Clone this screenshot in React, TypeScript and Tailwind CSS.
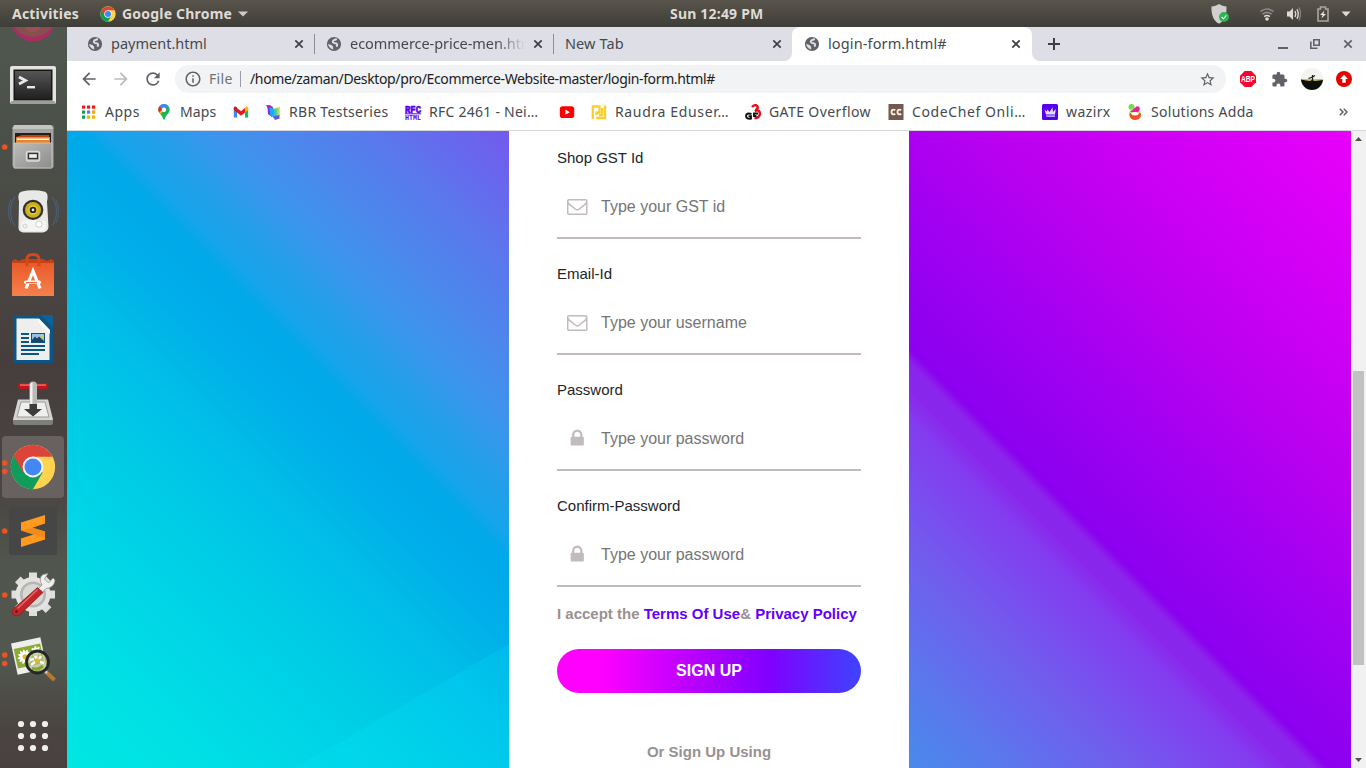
import React from "react";
import { MdStarBorder, MdExtension, MdRefresh, MdArrowBack, MdArrowForward, MdInfoOutline } from "react-icons/md";

const ui = "font-['Noto_Sans',sans-serif]";

function Globe() {
  return (
    <svg width="16" height="16" viewBox="0 0 16 16" className="shrink-0">
      <circle cx="8" cy="8" r="7.100" fill="#5f6368" />
      <path d="M10.800 3 L7.600 4.300 Q5.800 6 7.800 6.900 L10.600 7.600 Q12 9 10.200 10.400" fill="none" stroke="#dfe0e6" strokeWidth="1.900" />
      <path d="M2 8 L5.600 9 Q7.800 10.400 7.200 13.400 Q3 12.400 2 8Z" fill="#dfe0e6" />
    </svg>
  );
}

function CloseX({ color = "#3c4043" }: { color?: string }) {
  return (
    <svg width="10" height="10" viewBox="0 0 10 10" className="shrink-0">
      <path d="M1.3 1.3 L8.7 8.7 M8.7 1.3 L1.3 8.7" stroke={color} strokeWidth="1.7" />
    </svg>
  );
}

function ChromeLogo({ size }: { size: number }) {
  return (
    <svg width={size} height={size} viewBox="0 0 48 48" className="shrink-0">
      <circle cx="24" cy="24" r="23" fill="#ffd24a" />
      <path d="M24 24 L4.1 12.5 A23 23 0 0 0 24 47 L34 29.8Z" fill="#109d58" />
      <path d="M24 24 L14 29.8 L4.1 12.5 A23 23 0 0 1 43.9 12.8 L24 12.8Z" fill="#dc4437" />
      <circle cx="24" cy="24" r="11.2" fill="#f4f4f4" />
      <circle cx="24" cy="24" r="9" fill="#4285f4" />
    </svg>
  );
}

function TopBar() {
  return (
    <header className={`flex h-[27px] shrink-0 items-center bg-linear-to-b from-[#59554c] to-[#3e3d38] text-[14px] font-bold text-[#dfdbd2] ${ui}`}>
      <span className="ml-3 w-[69px] whitespace-nowrap tracking-[0.2px]">Activities</span>
      <span className="ml-[19px]"><ChromeLogo size={16} /></span>
      <span className="ml-[6px] w-[112px] whitespace-nowrap tracking-[0.2px]">Google Chrome</span>
      <svg width="10" height="6" viewBox="0 0 10 6" className="ml-[4px]"><path d="M0 .5H10L5 5.500Z" fill="#cfccc4" /></svg>
      <span className="ml-[422px] whitespace-nowrap tracking-[0.2px]">Sun 12:49 PM</span>
      <div className="ml-auto flex items-center">
        <svg width="20" height="22" viewBox="0 0 20 22" className="mr-[29px]">
          <path d="M9 1 C6.5 2.8 4 3.2 1.5 3.4 C1.2 11 3 17.5 9 20.8 C15 17.5 16.8 11 16.5 3.4 C14 3.2 11.5 2.8 9 1Z" fill="#d0cfcd" />
          <circle cx="14" cy="14" r="5" fill="#2fb350" />
          <path d="M11.6 14 L13.4 15.8 L16.4 12.4" stroke="#fff" strokeWidth="1.1" fill="none" />
        </svg>
        <svg width="16" height="16" viewBox="0 0 16 16" className="mr-[11px]" fill="none">
          <path d="M1.5 5.5 Q8 .5 14.5 5.5" stroke="#8b8984" strokeWidth="1.6" />
          <path d="M3.4 8.2 Q8 4.6 12.6 8.2" stroke="#8b8984" strokeWidth="1.6" />
          <path d="M5.2 10.6 Q8 8.4 10.8 10.6" stroke="#dfdbd2" strokeWidth="1.6" />
          <circle cx="8" cy="13" r="1.8" fill="#dfdbd2" />
        </svg>
        <svg width="16" height="16" viewBox="0 0 16 16" className="mr-[15px]" fill="none">
          <path d="M1 5.5H3.5L7 2V14L3.5 10.5H1Z" fill="#dfdbd2" />
          <path d="M9 5 Q10.6 8 9 11" stroke="#dfdbd2" strokeWidth="1.4" />
          <path d="M11 3.2 Q13.4 8 11 12.8" stroke="#dfdbd2" strokeWidth="1.4" />
          <path d="M13 1.6 Q16 8 13 14.4" stroke="#8b8984" strokeWidth="1.2" />
        </svg>
        <svg width="12" height="16" viewBox="0 0 12 16" className="mr-[12px]" fill="none">
          <path d="M1 3H3.5V1H8.5V3H11V15H1Z" stroke="#a9a69f" strokeWidth="1.6" />
          <path d="M7.5 4.5 L3 9H5.6L4.4 12.5 L9 8H6.4Z" fill="#eeeae1" />
        </svg>
        <svg width="10" height="6" viewBox="0 0 10 6" className="mr-[15px]"><path d="M.5 .5H9.5L5 5.5Z" fill="#dfdbd2" /></svg>
      </div>
    </header>
  );
}

function Cell({ children, dots = [], active = false }: { children: React.ReactNode; dots?: number[]; active?: boolean }) {
  return (
    <div className="ml-px flex h-16 w-16 shrink-0 items-center">
      <svg width="64" height="64" viewBox="0 0 64 64" className="overflow-visible">
        {active && <rect x="1" y="-1" width="62" height="62" rx="4" fill="#676260" />}
        {dots.map((y) => (
          <circle key={y} cx="3.7" cy={y} r="2.8" fill="#e95420" />
        ))}
        {children}
      </svg>
    </div>
  );
}

function Dock() {
  return (
    <aside className="flex w-[67px] shrink-0 flex-col overflow-hidden bg-[linear-gradient(180deg,#50574e_0%,#4a5049_16%,#4b4643_30%,#453e3d_45%,#4a4442_62%,#50554d_72%,#525850_85%,#4b4743_93%,#493f3f_100%)]">
      <div className="ml-px h-[26px] shrink-0">
        <svg width="64" height="26" viewBox="0 0 64 26">
          <ellipse cx="32" cy="-7" rx="22" ry="21.500" fill="#a92d62" />
          <ellipse cx="32" cy="-9" rx="21" ry="19" fill="#87504e" />
          <ellipse cx="32" cy="-2" rx="8" ry="7" fill="#9a5156" />
        </svg>
      </div>
      <Cell>
        <defs><linearGradient id="term" x1="0" y1="0" x2="0" y2="1"><stop stopColor="#555" /><stop offset="1" stopColor="#202020" /></linearGradient></defs>
        <rect x="9" y="13" width="46" height="38" rx="2" fill="#e3e3e1" />
        <rect x="10" y="48" width="44" height="3" rx="1" fill="#9d9d9b" />
        <rect x="12.500" y="16.500" width="39" height="31" fill="#161616" />
        <rect x="14" y="18" width="36" height="28" fill="url(#term)" />
        <path d="M18 24 L24.500 27.500 L18 31" stroke="#e8e8e8" strokeWidth="2.800" fill="none" />
        <rect x="26" y="33" width="8" height="2.400" fill="#e8e8e8" />
      </Cell>
      <Cell dots={[30]}>
        <path d="M13 9 L15 8 H49 L52.500 9 V50 L50 51.500 H14 L11.500 49 V10Z" fill="#a3a3a1" />
        <path d="M13 8 H50 L52.500 12 H11.500Z" fill="#c4c4c2" />
        <rect x="14" y="16" width="36" height="11" fill="#201f1e" />
        <path d="M15 20 L21 18 H48 V21Z" fill="#c1440e" />
        <rect x="15" y="20" width="34" height="6" fill="#e8842a" />
        <rect x="16" y="21.500" width="32" height="1.500" fill="#fff3e4" />
        <defs><linearGradient id="drw" x1="0" y1="0" x2="1" y2="1"><stop stopColor="#bcbcba" /><stop offset="1" stopColor="#8d8d8b" /></linearGradient></defs>
        <path d="M13 26 H51 V51 H13Z" fill="url(#drw)" stroke="#c9c9c7" strokeWidth=".8" />
        <rect x="25.500" y="34.500" width="13" height="9.500" rx="2" fill="#aaa" stroke="#dbdbdb" strokeWidth="1.500" />
        <rect x="27.500" y="36.500" width="9" height="5" fill="#eee" stroke="#333" strokeWidth="1.300" />
      </Cell>
      <Cell>
        <g transform="translate(0,-1) scale(1,.98)">
          <g fill="none" stroke="#4b6588" strokeWidth="1.200" strokeOpacity=".7">
            <path d="M14 17 Q5 32 14 47 M10 20 Q5 32 10 44 M51 17 Q60 32 51 47 M55 20 Q60 32 55 44" />
          </g>
          <path d="M20 12 Q32 9 44 12 Q48 14 46 22 L47.500 48 Q47 53 42 53.500 H22 Q17 53 17.500 48 L18 22 Q16 14 20 12Z" fill="#e8e8e6" />
          <rect x="20" y="41" width="25" height="11" rx="4" fill="#f5f5f3" />
          <circle cx="32" cy="30.500" r="10.300" fill="#30302f" />
          <circle cx="32" cy="30.500" r="8" fill="#ccb018" />
          <circle cx="32" cy="30.500" r="4.700" fill="#e6cf3f" />
          <circle cx="32" cy="30.500" r="3.300" fill="#292929" />
          <circle cx="32" cy="30.500" r="1.300" fill="#eee" />
          <circle cx="38" cy="45" r="3.200" fill="#fff" stroke="#ccc" />
          <circle cx="24" cy="47" r="2" fill="none" stroke="#ccc" />
        </g>
      </Cell>
      <Cell>
        <defs><linearGradient id="bag" x1="0" y1="0" x2="0" y2="1"><stop stopColor="#e95a2a" /><stop offset="1" stopColor="#f5814c" /></linearGradient></defs>
        <path d="M11 16 L14 14 L18 16 L22 14 H42 L46 16 L50 14 L53 16 V51 H11Z" fill="#c64214" />
        <rect x="11" y="18" width="42" height="33" fill="url(#bag)" />
        <path d="M26 21 V14 Q26 9.500 32 9.500 Q38 9.500 38 14 V21" fill="none" stroke="#d44818" strokeWidth="3" />
        <path d="M25 43.500 L32 26 L39 43.500" fill="none" stroke="#fff" strokeWidth="3.200" />
        <rect x="23" y="35.500" width="17" height="3.600" rx="1.800" fill="#fff" />
        <rect x="25" y="37" width="11" height="1.400" fill="#ef6d39" />
      </Cell>
      <Cell>
        <path d="M14 6 H41 L52 18 V52 Q52 54 50 54 H14 Q12 54 12 52 V8 Q12 6 14 6Z" fill="#0c5687" />
        <path d="M40 6 H50 Q52 6 52 8 V18.500Z" fill="#0d629b" />
        <path d="M15.500 9.500 H36 L48.500 23 V51 H15.500Z" fill="#eeeeed" />
        <path d="M35 10 L49 25 V21 L38 9.500Z" fill="#fff" />
        <g fill="#0b5585">
          <rect x="20" y="24" width="8" height="2" /><rect x="20" y="28" width="8" height="2" /><rect x="20" y="32" width="8" height="2" />
          <rect x="20" y="36" width="24" height="2" /><rect x="20" y="40" width="24" height="2" /><rect x="20" y="44" width="18" height="2" />
        </g>
        <rect x="30" y="24" width="14" height="10" fill="#0b5585" />
        <rect x="31" y="25" width="12" height="8" fill="#8fc3e8" />
        <circle cx="41" cy="27" r="1.500" fill="#f6c837" />
        <path d="M31 31 L34 27.500 L36 29.500 L38 27.500 L43 32 V33 H31Z" fill="#23425a" />
      </Cell>
      <Cell>
        <g transform="translate(0,-2)">
          <path d="M17 29 H47 L52 48 V52 Q52 54 50 54 H14 Q12 54 12 52 V48Z" fill="#7d7f7a" />
          <path d="M17 28.500 H47 L52 49 H12Z" fill="#d5d6d3" />
          <path d="M20 31 H44 L48 46 H16Z" fill="#efefee" stroke="#999a96" />
          <rect x="17" y="12" width="30" height="6" rx="3" fill="#c31518" />
          <rect x="19" y="13.300" width="26" height="1.500" fill="#ee6e6b" />
          <path d="M28.500 14 Q28 10.500 32 10.500 Q36 10.500 36 14 V33 H28.500Z" fill="#b9bab7" />
          <path d="M29 13 V33 H31.500 V11.500Z" fill="#f1f1f0" />
          <path d="M28.500 33 H36 V38 H41 L32 45.500 L23 38 H28.500Z" fill="#3c3e3c" />
        </g>
      </Cell>
      <Cell active dots={[26, 34.5]}>
        <g transform="translate(8.800,6.800) scale(.965)">
          <circle cx="24" cy="24" r="23" fill="#ffd24f" />
          <path d="M24 24 L4.100 12.500 A23 23 0 0 0 24 47 L34 29.800Z" fill="#109d5c" />
          <path d="M24 24 L14 29.800 L4.100 12.500 A23 23 0 0 1 44.500 13.500 L24 13.500Z" fill="#dc4439" />
          <circle cx="24" cy="24" r="10.800" fill="#f4f4f4" />
          <circle cx="24" cy="24" r="8.800" fill="#4486f4" />
        </g>
      </Cell>
      <Cell dots={[30]}>
        <rect x="8" y="6" width="48" height="48" rx="3" fill="#464646" />
        <path d="M20 21.500 L44 14 V22.500 L31.500 26.700 L44 30.500 V38.500 L20 46 V37.500 L32.500 33.500 L20 29.500Z" fill="#ff9a1f" />
        <path d="M20 29.500 L32.500 33.500 L44 37 V30.500 L31.500 26.700Z" fill="#f08c1a" />
      </Cell>
      <Cell dots={[30]}>
        <g stroke="#dededc" strokeWidth="8">
          {[0, 45, 90, 135].map((a) => (
            <path key={a} d="M32 7.500 V51" transform={`rotate(${a} 32 29.500)`} />
          ))}
        </g>
        <circle cx="32" cy="29.500" r="17.500" fill="#e3e3e1" />
        <circle cx="32" cy="29.500" r="13" fill="#b5b6b4" />
        <circle cx="32" cy="29.500" r="10.500" fill="#d8d8d6" />
        <path d="M36 25 L41 20 Q37 13 42 9.500 L47 8.500 L43.500 14 L47.500 18 L52 13 L54 15 Q53 23 45 23.500 L39 30Z" fill="#efefee" stroke="#92938f" strokeWidth=".8" />
        <path d="M36.500 22.500 L42 27.500 L20 48.500 Q15 52.500 12 49.500 Q9.500 46 13.500 43Z" fill="#c2262a" stroke="#8d1518" strokeWidth=".7" />
        <path d="M36.500 24.500 L16.500 43.500" stroke="#e4696a" strokeWidth="1.500" />
        <circle cx="15.500" cy="46.500" r="1.300" fill="#611" />
      </Cell>
      <Cell dots={[26, 34.5]}>
        <g transform="rotate(-12 28 27)">
          <rect x="13" y="11" width="30" height="32" fill="#eeeeec" />
          <rect x="14.500" y="17" width="27" height="20" fill="#8bab32" />
          <g fill="#fff">
            {[0, 30, 60, 90, 120, 150].map((a) => <ellipse key={a} cx="24" cy="27" rx="7.500" ry="1.800" transform={`rotate(${a} 24 27)`} />)}
            {[0, 45, 90, 135].map((a) => <ellipse key={a} cx="36" cy="24" rx="5.500" ry="1.500" transform={`rotate(${a} 36 24)`} />)}
          </g>
          <circle cx="24" cy="27" r="2.600" fill="#f0b323" />
        </g>
        <path d="M45 43 L53.500 51" stroke="#b57a2c" strokeWidth="4" />
        <path d="M42 40 L46 44" stroke="#ccc" strokeWidth="2.500" />
        <circle cx="36.500" cy="33" r="11" fill="#b8c088" fillOpacity=".7" stroke="#252727" strokeWidth="2.800" />
        <path d="M29 31 L33 30 M30 36 L34 33 M34 27 L36 30 M40 27 L38 30 M39 33 L43 34" stroke="#fff" strokeWidth="2.500" />
        <circle cx="36" cy="31.500" r="2.200" fill="#f0b323" />
        <path d="M31 39 Q36 42 42 37" fill="none" stroke="#84a52e" strokeWidth="3" />
      </Cell>
      <div className="mt-[11px]">
        <Cell>
          {[20, 32, 44].map((x) => [20, 32, 44].map((y) => <circle key={`${x}-${y}`} cx={x} cy={y} r="3.100" fill="#f0efed" />))}
        </Cell>
      </div>
    </aside>
  );
}

const tabText = `whitespace-nowrap pb-0.5 text-[14.5px] leading-5 text-[#45494d] ${ui}`;

function TabStrip() {
  return (
    <div className="flex h-[34px] shrink-0 bg-white">
      <div className="flex flex-1 items-center rounded-br-lg bg-[#dedfe6]">
        <div className="flex h-5 w-[248px] items-center border-r border-[#8a8d91] pr-[10px] pl-5">
          <Globe />
          <span className={`ml-2 flex-1 ${tabText}`}>payment.html</span>
          <CloseX />
        </div>
        <div className="flex h-5 w-[239px] items-center border-r border-[#8a8d91] pr-[10px] pl-[11px]">
          <Globe />
          <span className={`ml-2 w-[175px] overflow-hidden mask-r-from-84% mask-r-to-100% tracking-[-0.05px] ${tabText}`}>ecommerce-price-men.html</span>
          <span className="ml-auto"><CloseX /></span>
        </div>
        <div className="flex h-5 flex-1 items-center pr-[10px] pl-[11px]">
          <span className={`flex-1 tracking-[0.1px] ${tabText}`}>New Tab</span>
          <CloseX />
        </div>
      </div>
      <div className="bg-[#dedfe6]">
        <div className="flex h-full w-[240px] items-center rounded-t-lg bg-white pr-[11px] pl-[12px]">
          <Globe />
          <span className={`ml-2 flex-1 tracking-[0.12px] ${tabText}`}>login-form.html#</span>
          <CloseX />
        </div>
      </div>
      <div className="flex w-[334px] items-center rounded-bl-lg bg-[#dedfe6] pr-[13px] pl-4">
        <svg width="12" height="12" viewBox="0 0 12 12"><path d="M6 0V12M0 6H12" stroke="#3c4043" strokeWidth="2" /></svg>
        <svg width="10" height="10" viewBox="0 0 10 10" className="mr-[22px] ml-auto"><path d="M0 9H10" stroke="#5f6368" strokeWidth="2" /></svg>
        <svg width="10" height="10" viewBox="0 0 10 10" className="mr-[23px]" fill="none" stroke="#5f6368" strokeWidth="1.600"><path d="M3.800 .8H9.200V6.200H3.800ZM.8 2.500V9.200H7.500" /></svg>
        <CloseX color="#5f6368" />
      </div>
    </div>
  );
}

function Toolbar() {
  return (
    <div className="flex h-9 shrink-0 items-center bg-white pr-[14px] pl-[12px] text-[#5f6368]">
      <MdArrowBack size={20} />
      <MdArrowForward size={20} className="ml-3 text-[#b9bbbe]" />
      <MdRefresh size={20} className="ml-3" />
      <div className="ml-3 flex h-7 flex-1 items-center rounded-full bg-[#f1f3f4] pr-[10px] pl-[9px]">
        <MdInfoOutline size={18} />
        <span className={`ml-[7px] w-[31px] pb-0.5 text-[14px] tracking-[0.3px] text-[#6d7175] ${ui}`}>File</span>
        <span className="h-4 w-px bg-[#9a9da1]" />
        <span className={`ml-[9px] whitespace-nowrap pb-0.5 text-[14px] text-[#202124] ${ui} tracking-[-0.36px]`}>/home/zaman/Desktop/pro/Ecommerce-Website-master/login-form.html#</span>
        <MdStarBorder size={17} className="ml-auto" />
      </div>
      <svg width="16" height="16" viewBox="0 0 16 16" className="ml-[14px]">
        <path d="M4.700 0H11.300L16 4.700V11.300L11.300 16H4.700L0 11.300V4.700Z" fill="#f0062e" />
        <text x="8" y="11" textAnchor="middle" fontSize="8.500" fontWeight="700" fill="#fff" fontFamily="Liberation Sans" textLength="14" lengthAdjust="spacingAndGlyphs">ABP</text>
      </svg>
      <MdExtension size={17} className="ml-[15px]" />
      <svg width="22" height="22" viewBox="0 0 22 22" className="ml-[13px]">
        <defs><clipPath id="av"><circle cx="11" cy="11" r="11" /></clipPath></defs>
        <g clipPath="url(#av)">
          <rect width="22" height="22" fill="#f2f4ee" />
          <path d="M0 11 H22 V14 H0Z" fill="#cfc25f" />
          <path d="M0 11.500 L5 12.500 L9 13 L11 12 L14 13 L22 12 V22 H0Z" fill="#0c0f08" />
          <path d="M11.500 7 V13 M7.500 10.500 L11.500 9 L14 7.500" stroke="#222" strokeWidth="1.300" fill="none" />
        </g>
      </svg>
      <svg width="16" height="16" viewBox="0 0 16 16" className="ml-[13px]">
        <circle cx="8" cy="8" r="8" fill="#e60000" />
        <path d="M8 3.700 L12 8H9.700V11.800H6.300V8H4Z" fill="#fff" />
      </svg>
    </div>
  );
}

const icons: Record<string, React.ReactNode> = {
  apps: (
    <>
      {["#ea1c1c", "#ea1c1c", "#ea1c1c", "#0f9d58", "#4285f4", "#f4a400", "#0f9d58", "#f4b400", "#f4b400"].map((c, i) => (
        <rect key={i} x={2 + (i % 3) * 5} y={1.500 + Math.floor(i / 3) * 5} width="3.200" height="3.200" fill={c} />
      ))}
    </>
  ),
  maps: (
    <>
      <path d="M8 0 A5.700 5.700 0 0 1 13.700 5.700 C13.700 9.500 9.500 11 8.800 15 Q8 16.500 7.200 15 C6.500 11 2.300 9.500 2.300 5.700 A5.700 5.700 0 0 1 8 0Z" fill="#1eb455" />
      <path d="M2.400 6.500 Q3 8.300 4.800 10 L9.500 4.500 L6 4Z" fill="#fbbc04" />
      <path d="M3.500 2.200 L7 5 L3.300 8.500 Q2.300 7 2.300 5.700 Q2.300 3.500 3.500 2.200Z" fill="#ea2a20" />
      <path d="M3.500 2.200 A5.700 5.700 0 0 1 12.500 2.200 L9 6 L6 5.200Z" fill="#4285f4" />
      <circle cx="8" cy="5.700" r="2.200" fill="#fff" />
    </>
  ),
  gmail: (
    <>
      <path d="M.8 4 V13.600 H4 V7Z" fill="#4285f4" /><path d="M15.200 4 V13.600 H12 V7Z" fill="#1eb455" />
      <path d="M4 4 L8 7.200 L12 4 V8.500 L8 11.700 L4 8.500Z" fill="#ea1515" />
      <path d="M.8 4 Q.8 2.300 2.600 2.600 L4 3.600 V8.500 L.8 6Z" fill="#c5221f" /><path d="M15.200 4 Q15.200 2.300 13.400 2.600 L12 3.600 V8.500 L15.200 6Z" fill="#fbbc04" />
    </>
  ),
  rbr: (
    <>
      <path d="M1 1 H5 L8 3 V12 L3 10 L3 5Z" fill="#f01fb5" /><path d="M2.500 2 L7 3 V13 L3 10Z" fill="#7a2cf0" /><path d="M4.500 3.200 L9 4.600 V14 L5 11Z" fill="#22a9f4" />
      <path d="M9 4.500 L15 2.500 V11.500 L10 14Z" fill="#f6dc3a" /><path d="M9 5 L13.500 4 V12 L9.500 14Z" fill="#6fe37a" /><path d="M9 5 L11.500 4.800 V13 L9 14Z" fill="#2fc4e0" /><path d="M8 12.500 L14.500 11 V14.500 L10 16Z" fill="#6a52e0" />
    </>
  ),
  rfc: (
    <g fill="#5a00ee" fontFamily="Liberation Mono" fontWeight="700">
      <text x="0" y="8.500" fontSize="10.500" textLength="16" lengthAdjust="spacingAndGlyphs" stroke="#5a00ee" strokeWidth=".7">RFC</text>
      <rect y="9.300" width="16" height="1" />
      <text x="0" y="16" fontSize="7" textLength="16" lengthAdjust="spacingAndGlyphs">HTML</text>
    </g>
  ),
  yt: (
    <><rect x=".8" y="2.300" width="14.400" height="11.700" rx="2.800" fill="#f00" /><path d="M6.400 5.600 L10.800 8.200 L6.400 10.800Z" fill="#fff" /></>
  ),
  raudra: (
    <g fill="none" stroke="#f9cf2c" strokeWidth="2.300">
      <path d="M1.800 15 V2.500 H8.500 V8.500 H5.500 V11" /><path d="M14 1.500 V14 H5 M11 4 V11 H8" />
    </g>
  ),
  gate: (
    <>
      <path d="M7 3 Q10 -.5 12.500 2.500 Q13.500 5 10 7.500 M10 6 Q15 5.500 15 10 Q14 14.500 9.500 14" fill="none" stroke="#e0101c" strokeWidth="2.500" />
      <path d="M6.500 10 Q1.300 8.500 1 12 Q1.500 15.500 6 14.500 V12.300 H3.500 M13 9.500 H9 V12 H11.500" fill="none" stroke="#101010" strokeWidth="1.900" />
    </>
  ),
  cc: (
    <><rect x=".5" y="0" width="15" height="16" fill="#74594a" /><path d="M7.300 6.200 Q3.500 4.500 3.500 8 Q3.500 11.500 7.300 9.800 M13.300 6.200 Q9.500 4.500 9.500 8 Q9.500 11.500 13.300 9.800" fill="none" stroke="#f3ede6" strokeWidth="1.900" /></>
  ),
  wazirx: (
    <><rect width="16" height="16" rx="1.500" fill="#5500ee" /><path d="M2.500 5.500 L4.800 7.500 L5.500 5.500 L7.500 8 L10.500 3.500 L11 8 L13.800 5 L13 10.500 H4Z" fill="#e5dcff" /><path d="M4 11.400 H13 V12.800 H4.500Z" fill="#e5dcff" /></>
  ),
  adda: (
    <>
      <circle cx="4.500" cy="3" r="3" fill="#72dd4f" /><circle cx="8" cy="10" r="6" fill="#b4ef8a" /><path d="M3 8 L8 3.500 L12.500 6 L11 8Z" fill="#f0249c" />
      <path d="M2.500 9.500 Q8 7 14 9.500 Q14.500 15.500 8 16 Q2 15.500 2.500 9.500Z" fill="#f3511e" /><path d="M4 9 Q8 7 12 9 Q11.500 11.500 8 11.500 Q4.500 11.500 4 9Z" fill="#fff" /><circle cx="10.500" cy="4.600" r="2.300" fill="#ec1d92" />
    </>
  ),
};

const bookmarks: [string, string, string, string][] = [
  ["apps", "Apps", "w-[76px]", "ml-px tracking-[0.5px]"],
  ["maps", "Maps", "w-[77px]", "tracking-[0.1px]"],
  ["gmail", "", "w-[32px]", ""],
  ["rbr", "RBR Testseries", "w-[140px]", "tracking-[0.3px]"],
  ["rfc", "RFC 2461 - Nei…", "w-[154px]", "tracking-[0.25px]"],
  ["yt", "", "w-[32px]", ""],
  ["raudra", "Raudra Eduser…", "w-[154px]", "tracking-[0.65px]"],
  ["gate", "GATE Overflow", "w-[143px]", "tracking-[0.4px]"],
  ["cc", "CodeChef Onli…", "w-[154px]", "tracking-[0.6px]"],
  ["wazirx", "wazirx", "w-[85px]", "tracking-[0.4px]"],
  ["adda", "Solutions Adda", "w-[150px]", "tracking-[0.3px]"],
];

function Bookmarks() {
  return (
    <nav className="flex h-[34px] shrink-0 items-center border-b border-[#d5d6dc] bg-white pr-[18px] pb-[3px] pl-[13px]">
      {bookmarks.map(([icon, label, width, track]) => (
        <div key={icon} className={`flex shrink-0 items-center gap-2 ${width}`}>
          <svg width="16" height="16" viewBox="0 0 16 16" className="shrink-0 overflow-visible">{icons[icon]}</svg>
          {label && <span className={`whitespace-nowrap pb-px text-[14px] leading-5 text-[#45494d] ${ui} ${track}`}>{label}</span>}
        </div>
      ))}
      <svg width="9" height="8" viewBox="0 0 9 8" className="ml-auto"><path d="M.8 .8L4 4L.8 7.200M4.800 .8L8 4L4.800 7.200" fill="none" stroke="#5f6368" strokeWidth="1.500" /></svg>
    </nav>
  );
}

const envelope = "M1664 1504v-768q-32 36-69 66-268 206-426 338-51 43-83 67t-86.5 48.5-102.5 24.5h-2q-48 0-102.5-24.5t-86.5-48.5-83-67q-158-132-426-338-37-30-69-66v768q0 13 9.5 22.5t22.5 9.5h1472q13 0 22.500-9.500t9.500-22.500zm0-1051v-24.500l-.5-13-3-12.500-5.500-9-9-7.500-14-2.500h-1472q-13 0-22.500 9.500t-9.500 22.500q0 168 147 284 193 152 401 317 6 5 35 29.500t46 37.500 44.500 31.500 50.500 27.500 43 9h2q20 0 43-9t50.500-27.500 44.500-31.500 46-37.500 35-29.500q208-165 401-317 54-43 100.500-115.500t46.500-131.500zm128-37v1088q0 66-47 113t-113 47h-1472q-66 0-113-47t-47-113v-1088q0-66 47-113t113-47h1472q66 0 113 47t47 113z";
const lock = "M640 768h512v-192q0-106-75-181t-181-75-181 75-75 181v192zm832 96v576q0 40-28 68t-68 28h-960q-40 0-68-28t-28-68v-576q0-40 28-68t68-28h32v-192q0-184 132-316t316-132 316 132 132 316v192h32q40 0 68 28t28 68z";

function Field({ label, placeholder, icon }: { label: string; placeholder: string; icon: string }) {
  return (
    <div className="flex h-[116px] shrink-0 flex-col border-b-2 border-[#c2babb] pt-[25px]">
      <label className="text-[15px] leading-5 text-[#212529]">{label}</label>
      <div className="mt-[28px] flex h-[22px] items-center pl-[10px]">
        <svg width="20.500" height="20.500" viewBox="0 0 1792 1792" className="mb-px shrink-0" fill="#c2babb"><path d={icon} /></svg>
        <input placeholder={placeholder} className="ml-[13.500px] w-[240px] bg-transparent p-0 text-[16px] leading-[22px] outline-none placeholder:text-[#757575]" />
      </div>
    </div>
  );
}

function Page() {
  return (
    <main className="relative flex min-h-0 flex-1 justify-center overflow-hidden bg-[linear-gradient(45deg,#00e8e2_0%,#00dfe6_8%,#00cde6_18.300%,#00bfe8_24.700%,#00b0e9_29.500%,#00a9ea_33%,#00a9ea_33.800%,#16a4ea_35%,#20a0e8_37%,#3b95ec_40.500%,#4a89ec_44%,#5a78ec_49%,#7458ee_56.500%,#7c48ee_59.500%,#843aef_62.200%,#8928ec_63.500%,#8a24ec_65%,#8c00f0_65.700%,#9000f0_67.500%,#a400f2_74.500%,#bb00f0_81.500%,#d400f6_91%,#e800fa_100%)] font-['Liberation_Sans',Arial,sans-serif]">
      <div className="absolute bottom-0 left-[228px] h-[124px] w-[214px] bg-[#00f0ff]/15 [clip-path:polygon(100%_0,100%_100%,0_100%)]" />
      <form className="relative -mt-2 flex w-[400px] flex-col bg-white px-12">
        <Field label="Shop GST Id" placeholder="Type your GST id" icon={envelope} />
        <Field label="Email-Id" placeholder="Type your username" icon={envelope} />
        <Field label="Password" placeholder="Type your password" icon={lock} />
        <Field label="Confirm-Password" placeholder="Type your password" icon={lock} />
        <p className="mt-[17px] whitespace-nowrap text-[15px] leading-5 font-bold text-[#999190]">
          I accept the <span className="text-[#6200ff]">Terms Of Use</span>&amp; <span className="text-[#6200ff]">Privacy Policy</span>
        </p>
        <button type="button" className="mt-[25px] h-11 shrink-0 rounded-full bg-[linear-gradient(90deg,#ff00ff_0%,#ff00ff_14%,#8000ff_70%,#3e44ff_100%)] text-[16px] font-bold text-white">SIGN UP</button>
        <p className="mt-[49px] text-center text-[15px] leading-5 font-bold text-[#999190]">Or Sign Up Using</p>
      </form>
    </main>
  );
}

function Scrollbar() {
  return (
    <div className="flex w-[15px] shrink-0 flex-col items-center bg-[#f1f1f1] pt-[6px] pb-[6px]">
      <svg width="7" height="4" viewBox="0 0 7 4"><path d="M0 4H7L3.500 0Z" fill="#505050" /></svg>
      <div className="mt-[230px] h-[294px] w-[11px] bg-[#c1c1c1]" />
      <svg width="7" height="4" viewBox="0 0 7 4" className="mt-auto"><path d="M0 0H7L3.500 4Z" fill="#505050" /></svg>
    </div>
  );
}

export default function App() {
  return (
    <div className="flex h-[768px] w-[1366px] flex-col overflow-hidden bg-white">
      <TopBar />
      <div className="flex min-h-0 flex-1">
        <Dock />
        <div className="flex min-w-0 flex-1 flex-col">
          <TabStrip />
          <Toolbar />
          <Bookmarks />
          <div className="flex min-h-0 flex-1">
            <Page />
            <Scrollbar />
          </div>
        </div>
      </div>
    </div>
  );
}
